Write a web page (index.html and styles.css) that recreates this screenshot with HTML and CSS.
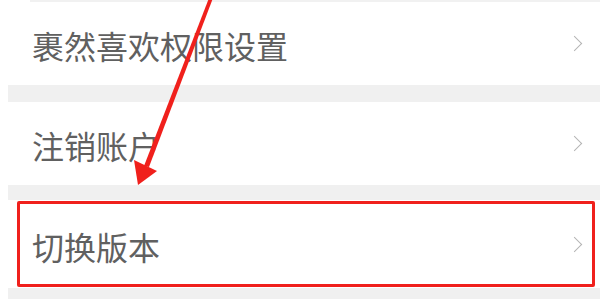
FILE: index.html
```html
<!DOCTYPE html>
<html lang="zh-CN">
<head>
    <meta charset="UTF-8">
    <meta name="viewport" content="width=device-width, initial-scale=1.0">
    <title>设置</title>
    <link rel="stylesheet" href="styles.css">
</head>
<body>

<div class="settings">
    <div class="top-line"></div>

    <div class="row">
        <span class="row-title">裹然喜欢权限设置</span>
        <span class="chevron"></span>
    </div>

    <div class="gap"></div>

    <div class="row">
        <span class="row-title">注销账户</span>
        <span class="chevron"></span>
    </div>

    <div class="gap gap-small"></div>

    <div class="row row-last">
        <span class="row-title">切换版本</span>
        <span class="chevron"></span>
    </div>

    <div class="gap gap-bottom"></div>

    <!-- annotation overlay -->
    <div class="mark-box"></div>
    <svg class="mark-arrow" width="600" height="308" viewBox="0 0 600 308">
        <polygon points="209,-2 213,-2 149,167 144,166" fill="#f0201c"/>
        <polygon points="134,160 157,171 138,185" fill="#f0201c"/>
    </svg>
</div>

</body>
</html>
```

FILE: styles.css
```css
body {
    margin: 0;
    padding: 0;
    background-color: #ffffff;
    font-family: "Noto Sans CJK SC", "Noto Sans", sans-serif;
}

.settings {
    position: relative;
    width: 600px;
    height: 308px;
    overflow: hidden;
    padding-left: 8px;
    box-sizing: border-box;
}

.top-line {
    height: 2px;
    margin-left: 22px;
    background-color: #f1f1f1;
}

.row {
    display: flex;
    align-items: center;
    justify-content: space-between;
    height: 83px;
    padding: 0 16px 0 24px;
    background-color: #ffffff;
}

.row-title {
    font-size: 32px;
    color: #606060;
    line-height: 1;
    padding-top: 3px;
}

.chevron {
    width: 10px;
    height: 10px;
    border-top: 1.5px solid #b4b4b4;
    border-right: 1.5px solid #b4b4b4;
    transform: rotate(45deg);
    margin-right: 4px;
}

.gap {
    height: 17px;
    background-color: #f0f0f0;
}

.gap-small {
    height: 15px;
}

.row-last {
    height: 88px;
}

.gap-bottom {
    height: 11px;
}

.mark-box {
    position: absolute;
    left: 17px;
    top: 201px;
    width: 572px;
    height: 80px;
    border: 3px solid #f0201c;
    border-radius: 2px;
}

.mark-arrow {
    position: absolute;
    left: 0;
    top: 0;
}
```
